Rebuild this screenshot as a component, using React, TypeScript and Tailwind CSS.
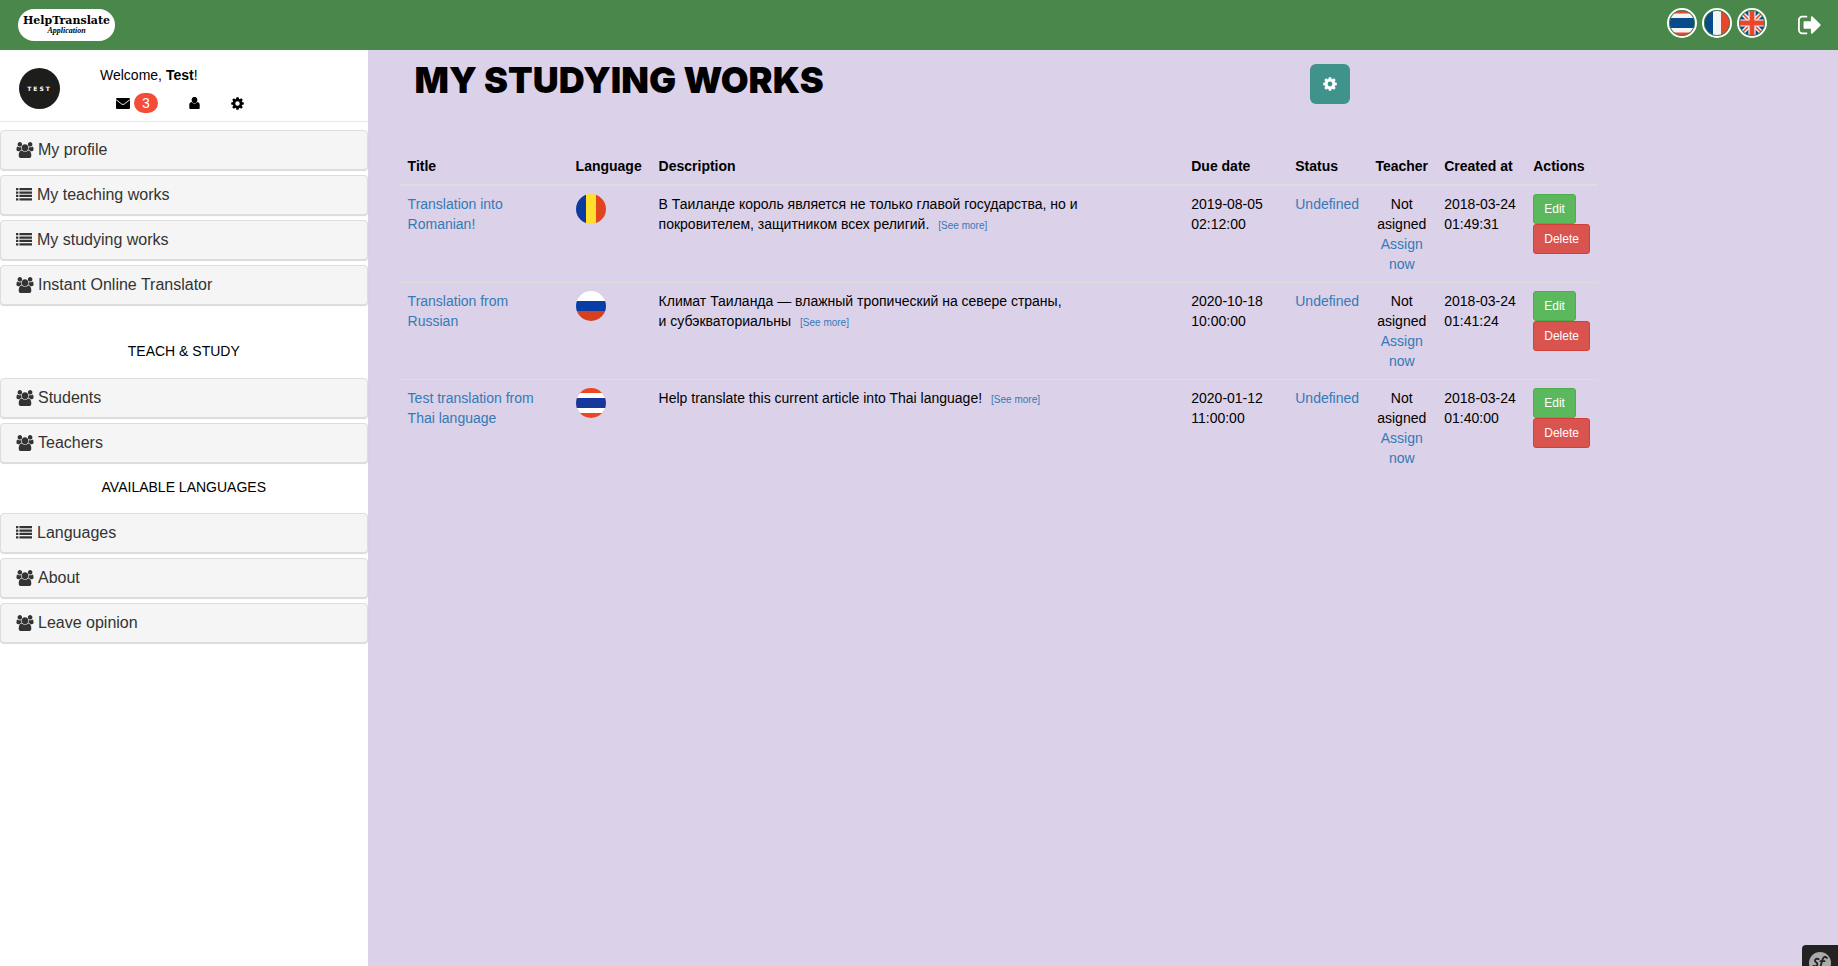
import React from "react";

type IconProps = { className?: string };

const UsersIcon = ({ className }: IconProps) => (
  <svg viewBox="0 0 1920 1792" className={className} fill="currentColor" aria-hidden="true">
    <path d="M593 896q-162 5-265 128h-134q-82 0-138-40.5t-56-118.5q0-353 124-353 6 0 43.5 21t97.5 42.5 119 21.5q67 0 133-23-5 37-5 66 0 139 81 256zm1071 637q0 120-73 189.5t-194 69.5h-874q-121 0-194-69.5t-73-189.5q0-53 3.5-103.5t14-109 26.5-108.5 43-97.5 62-81 85.5-53.5 111.5-20q10 0 43 21.5t73 48 107 48 135 21.5 135-21.5 107-48 73-48 43-21.5q61 0 111.5 20t85.5 53.5 62 81 43 97.5 26.5 108.5 14 109 3.5 103.5zm-1024-1277q0 106-75 181t-181 75-181-75-75-181 75-181 181-75 181 75 75 181zm704 384q0 159-112.5 271.5t-271.5 112.5-271.5-112.5-112.5-271.5 112.5-271.5 271.5-112.5 271.5 112.5 112.5 271.5zm576 225q0 78-56 118.5t-138 40.5h-134q-103-123-265-128 81-117 81-256 0-29-5-66 66 23 133 23 59 0 119-21.5t97.5-42.5 43.5-21q124 0 124 353zm-128-609q0 106-75 181t-181 75-181-75-75-181 75-181 181-75 181 75 75 181z" />
  </svg>
);

const ListIcon = ({ className }: IconProps) => (
  <svg viewBox="0 0 16 16" className={className} fill="currentColor" aria-hidden="true">
    {[1, 4.4, 7.8, 11.2].map((y) => (
      <g key={y}>
        <rect x="0" y={y} width="2.4" height="2.3" rx="0.3" />
        <rect x="3.4" y={y} width="12.6" height="2.3" rx="0.3" />
      </g>
    ))}
  </svg>
);

const SignOutIcon = ({ className }: IconProps) => (
  <svg viewBox="0 0 1664 1792" className={className} fill="currentColor" aria-hidden="true">
    <path d="M640 1440q0 4 1 20t.5 26.5-3 23.5-10 19.5-20.5 6.5h-320q-119 0-203.5-84.5t-84.5-203.5v-704q0-119 84.5-203.5t203.5-84.5h320q13 0 22.5 9.5t9.5 22.5q0 4 1 20t.5 26.5-3 23.5-10 19.5-20.5 6.5h-320q-66 0-113 47t-47 113v704q0 66 47 113t113 47h312l11.5 1 11.5 3 8 5.5 7 9 2 13.5zm928-544q0 26-19 45l-544 544q-19 19-45 19t-45-19-19-45v-288h-448q-26 0-45-19t-19-45v-384q0-26 19-45t45-19h448v-288q0-26 19-45t45-19 45 19l544 544q19 19 19 45z" />
  </svg>
);

const EnvelopeIcon = ({ className }: IconProps) => (
  <svg viewBox="0 0 14 11" className={className} aria-hidden="true">
    <rect width="14" height="11" rx="1" fill="currentColor" />
    <path d="M0 1.600L5.600 6Q7 7 8.400 6L14 1.600" fill="none" stroke="#fff" strokeWidth="0.900" />
  </svg>
);

const UserIcon = ({ className }: IconProps) => (
  <svg viewBox="0 0 11 12" className={className} fill="currentColor" aria-hidden="true">
    <ellipse cx="5.5" cy="3" rx="2.9" ry="3.1" />
    <path d="M2.6 5C.9 5.400.3 6.400.3 8v3q0 1 1 1h8.400q1 0 1-1V8c0-1.600-.6-2.600-2.300-3Q7.300 6.500 5.500 6.500T2.600 5z" />
  </svg>
);

const CogIcon = ({ className }: IconProps) => (
  <svg viewBox="-7 -7 14 14" className={className} aria-hidden="true">
    <circle r="3.8" fill="none" stroke="currentColor" strokeWidth="2.8" />
    {[0, 45, 90, 135, 180, 225, 270, 315].map((a) => (
      <path key={a} transform={`rotate(${a})`} d="M-1.7-4.500L-1.200-6.800H1.200L1.700-4.500z" fill="currentColor" />
    ))}
  </svg>
);

type FlagName = "thai" | "french" | "british";

const HeaderFlag = ({ name }: { name: FlagName }) => (
  <svg viewBox="0 0 30 30" className="block size-[30px]" aria-hidden="true">
    <defs>
      <clipPath id={`clip-${name}`}>
        <circle cx="15" cy="15" r="12.600" />
      </clipPath>
    </defs>
    <g clipPath={`url(#clip-${name})`}>
      {name === "thai" && (
        <>
          <path fill="#e8472b" d="M0 0h30v30H0z" />
          <path fill="#f4f4f4" d="M0 5.500h30v19H0z" />
          <path fill="#084b8a" d="M0 10h30v10H0z" />
        </>
      )}
      {name === "french" && (
        <>
          <path fill="#084b8a" d="M0 0h11v30H0z" />
          <path fill="#f4f4f4" d="M11 0h8v30h-8z" />
          <path fill="#e8472b" d="M19 0h11v30H19z" />
        </>
      )}
      {name === "british" && (
        <>
          <path fill="#084b8a" d="M0 0h30v30H0z" />
          <path stroke="#f4f4f4" strokeWidth="4.500" d="M4 4l22 22M26 4L4 26" />
          <path stroke="#e8472b" strokeWidth="1.600" d="M4 4l22 22M26 4L4 26" />
          <path stroke="#f4f4f4" strokeWidth="7.200" d="M15 0v30M0 15h30" />
          <path stroke="#e8472b" strokeWidth="4.800" d="M15 0v30M0 15h30" />
        </>
      )}
    </g>
    <circle cx="15" cy="15" r="14" fill="none" stroke="#fff" strokeWidth="2" />
    <circle cx="15" cy="15" r="12.600" fill="none" stroke="#3f7a4a" strokeWidth="0.900" />
  </svg>
);

const RowFlag = ({ country }: { country: string }) => (
  <svg viewBox="0 0 30 30" className="block size-[30px] rounded-full" role="img" aria-label={country}>
    {country === "Romanian" && (
      <>
        <path fill="#0d3a9e" d="M0 0h10v30H0z" />
        <path fill="#ffde2e" d="M10 0h10v30H10z" />
        <path fill="#df451f" d="M20 0h10v30H20z" />
      </>
    )}
    {country === "Russian" && (
      <>
        <path fill="#fff" d="M0 0h30v10H0z" />
        <path fill="#083ca6" d="M0 10h30v10H0z" />
        <path fill="#d5401f" d="M0 20h30v10H0z" />
      </>
    )}
    {country === "Thai" && (
      <>
        <path fill="#ee471f" d="M0 0h30v30H0z" />
        <path fill="#fff" d="M0 5h30v20H0z" />
        <path fill="#17379a" d="M0 10h30v10H0z" />
      </>
    )}
  </svg>
);

type MenuItem = { label: string; icon: "users" | "list" };

const mainMenu: MenuItem[] = [
  { label: "My profile", icon: "users" },
  { label: "My teaching works", icon: "list" },
  { label: "My studying works", icon: "list" },
  { label: "Instant Online Translator", icon: "users" },
];
const studyMenu: MenuItem[] = [
  { label: "Students", icon: "users" },
  { label: "Teachers", icon: "users" },
];
const languageMenu: MenuItem[] = [
  { label: "Languages", icon: "list" },
  { label: "About", icon: "users" },
  { label: "Leave opinion", icon: "users" },
];

const Menu = ({ items }: { items: MenuItem[] }) => (
  <ul className="flex flex-col gap-[5px]">
    {items.map((item) => (
      <li key={item.label}>
        <a
          href="#"
          className="flex h-10 items-center rounded border border-[#ddd] bg-[#f5f5f5] px-[15px] text-base text-[#333] shadow-[0_1px_1px_rgba(0,0,0,0.15)]"
        >
          {item.icon === "users" ? (
            <UsersIcon className="mr-1 h-4 w-[18px]" />
          ) : (
            <ListIcon className="mr-[5px] size-4" />
          )}
          {item.label}
        </a>
      </li>
    ))}
  </ul>
);

const works = [
  {
    title: "Translation into Romanian!",
    country: "Romanian",
    description:
      "В Таиланде король является не только главой государства, но и покровителем, защитником всех религий.",
    due: "2019-08-05 02:12:00",
    created: "2018-03-24 01:49:31",
  },
  {
    title: "Translation from Russian",
    country: "Russian",
    description: "Климат Таиланда — влажный тропический на севере страны, и\u00a0субэкваториальны",
    due: "2020-10-18 10:00:00",
    created: "2018-03-24 01:41:24",
  },
  {
    title: "Test translation from Thai language",
    country: "Thai",
    description: "Help translate this current article into Thai language!",
    due: "2020-01-12 11:00:00",
    created: "2018-03-24 01:40:00",
  },
];

export default function App() {
  return (
    <div className="flex min-h-screen flex-col bg-[#dbd1e8] font-['Liberation_Sans',Arial,sans-serif] text-sm leading-5 text-black">
      <header className="flex h-[50px] items-center justify-between bg-[#4a874a] pr-4 pl-[18px]">
        <a
          href="#"
          className="flex h-8 w-[97px] flex-col items-center justify-center rounded-full bg-white text-black"
        >
          <span className="font-['DejaVu_Serif',serif] text-[11px] leading-3 font-black">HelpTranslate</span>
          <span className="font-['Liberation_Serif',serif] text-[8px] leading-2 font-bold italic">Application</span>
        </a>
        <nav className="flex items-center gap-[5px]">
          <a href="#" aria-label="ไทย" className="-mt-1">
            <HeaderFlag name="thai" />
          </a>
          <a href="#" aria-label="Français" className="-mt-1">
            <HeaderFlag name="french" />
          </a>
          <a href="#" aria-label="English" className="-mt-1">
            <HeaderFlag name="british" />
          </a>
          <a href="#" aria-label="Log out" className="ml-[26px] text-white">
            <SignOutIcon className="h-[26px] w-6" />
          </a>
        </nav>
      </header>

      <div className="flex grow">
        <aside className="w-1/5 shrink-0 bg-white">
          <div className="flex h-[72px] items-start border-b border-[#e7e7ee] pl-[19px]">
            <div className="mt-[18px] flex size-[41px] items-center justify-center rounded-full bg-[#1d1d1b] font-['DejaVu_Sans',sans-serif] text-[6px] font-bold tracking-[2px] text-white">
              TEST
            </div>
            <div className="mt-[15px] ml-10">
              <p>
                Welcome, <b>Test</b>!
              </p>
              <div className="mt-2 flex h-5 items-center pl-4">
                <a href="#" aria-label="Messages" className="flex items-center gap-1">
                  <EnvelopeIcon className="h-[11px] w-[14px]" />
                  <span className="flex h-5 w-6 items-center justify-center rounded-full bg-[#f44c38] text-sm text-white">
                    3
                  </span>
                </a>
                <a href="#" aria-label="Account" className="ml-[31px]">
                  <UserIcon className="h-3 w-[11px]" />
                </a>
                <a href="#" aria-label="Settings" className="ml-[31px]">
                  <CogIcon className="size-[13px]" />
                </a>
              </div>
            </div>
          </div>
          <div className="pt-2">
            <Menu items={mainMenu} />
            <h2 className="mt-9 mb-[17px] text-center">TEACH &amp; STUDY</h2>
            <Menu items={studyMenu} />
            <h2 className="mt-[14px] mb-4 text-center">AVAILABLE LANGUAGES</h2>
            <Menu items={languageMenu} />
          </div>
        </aside>

        <main className="min-w-0 grow pl-8">
          <div className="w-5/6">
            <div className="flex h-[98px] items-start pt-[14px] pl-[15px]">
              <h1 className="w-[895px] font-['Inter',sans-serif] text-4xl leading-8 font-black uppercase">
                My studying works
              </h1>
              <button
                type="button"
                aria-label="Table settings"
                className="flex size-10 items-center justify-center rounded-md bg-[#3f938b] text-white"
              >
                <CogIcon className="size-[14px]" />
              </button>
            </div>
            <table className="w-full table-fixed border-collapse text-left">
              <colgroup>
                <col className="w-[168px]" />
                <col className="w-[83px]" />
                <col />
                <col className="w-[104px]" />
                <col className="w-20" />
                <col className="w-[69px]" />
                <col className="w-[89px]" />
                <col className="w-[73px]" />
              </colgroup>
              <thead>
                <tr className="border-b-2 border-[#ddd]">
                  <th className="p-2">Title</th>
                  <th className="p-2">Language</th>
                  <th className="p-2">Description</th>
                  <th className="p-2">Due date</th>
                  <th className="p-2">Status</th>
                  <th className="p-2 text-center">Teacher</th>
                  <th className="p-2">Created at</th>
                  <th className="p-2">Actions</th>
                </tr>
              </thead>
              <tbody>
                {works.map((work) => (
                  <tr key={work.title} className="border-t border-[#ddd] align-top">
                    <td className="p-2">
                      <a href="#" className="text-[#337ab7]">
                        {work.title}
                      </a>
                    </td>
                    <td className="p-2">
                      <RowFlag country={work.country} />
                    </td>
                    <td className="p-2">
                      {work.description}
                      <a href="#" className="ml-[9px] text-[10px] text-[#337ab7]">
                        [See more]
                      </a>
                    </td>
                    <td className="p-2">{work.due}</td>
                    <td className="p-2">
                      <a href="#" className="text-[#337ab7]">
                        Undefined
                      </a>
                    </td>
                    <td className="p-2 text-center">
                      Not asigned{" "}
                      <a href="#" className="text-[#337ab7]">
                        Assign now
                      </a>
                    </td>
                    <td className="p-2">{work.created}</td>
                    <td className="p-2">
                      <div className="flex flex-col items-start">
                        <button
                          type="button"
                          className="h-[30px] rounded-[3px] border border-[#4cae4c] bg-[#5cb85c] px-[10px] text-xs text-white"
                        >
                          Edit
                        </button>
                        <button
                          type="button"
                          className="h-[30px] rounded-[3px] border border-[#d43f3a] bg-[#d9534f] px-[10px] text-xs text-white"
                        >
                          Delete
                        </button>
                      </div>
                    </td>
                  </tr>
                ))}
              </tbody>
            </table>
          </div>
        </main>
      </div>

      <button
        type="button"
        aria-label="Open debug toolbar"
        className="fixed right-0 bottom-0 flex h-[21px] w-9 items-start justify-center overflow-hidden rounded-tl bg-[#222] pt-[7px]"
      >
        <svg viewBox="0 0 24 24" className="size-[22px] shrink-0" aria-hidden="true">
          <circle cx="12" cy="12" r="12" fill="#aaa" />
          <path
            d="M10.500 7.800Q7.500 6.500 6.500 9c-.8 2 3.500 2.500 2.500 5q-1.200 2.500-4 1M19.500 6.500Q17 3.500 15 7.500L12.500 16q-1 4-3.500 3M12.500 10h4.500"
            fill="none"
            stroke="#222"
            strokeWidth="2"
            strokeLinecap="round"
          />
        </svg>
      </button>
    </div>
  );
}
